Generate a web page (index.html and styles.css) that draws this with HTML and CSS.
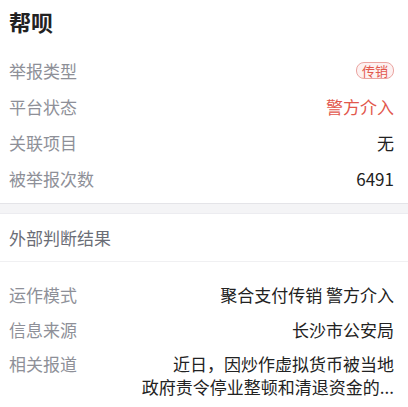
FILE: index.html
```html
<!DOCTYPE html>
<html lang="zh-CN">
<head>
  <meta charset="UTF-8" />
  <meta name="viewport" content="width=device-width, initial-scale=1.0"/>
  <title>帮呗</title>
  <link rel="stylesheet" href="styles.css">
</head>
<body>
  <section class="card">
    <h1 class="title">帮呗</h1>
    <div class="rows">
      <div class="row"><span class="label">举报类型</span><span class="tag">传销</span></div>
      <div class="row"><span class="label">平台状态</span><span class="value alert">警方介入</span></div>
      <div class="row"><span class="label">关联项目</span><span class="value">无</span></div>
      <div class="row"><span class="label">被举报次数</span><span class="value">6491</span></div>
    </div>
  </section>

  <div class="divider"></div>

  <section class="card">
    <h2 class="section-title">外部判断结果</h2>
    <div class="rows rows-ext">
      <div class="row"><span class="label">运作模式</span><span class="value">聚合支付传销 警方介入</span></div>
      <div class="row"><span class="label">信息来源</span><span class="value">长沙市公安局</span></div>
      <div class="row row-top">
        <span class="label">相关报道</span>
        <span class="value report">近日，因炒作虚拟货币被当地<br>政府责令停业整顿和清退资金的...</span>
      </div>
    </div>
  </section>
</body>
</html>
```

FILE: styles.css
```css
body {
  margin: 0;
  font-family: "Noto Sans CJK SC", "Noto Sans", sans-serif;
  background: #fff;
  color: #222;
  width: 408px;
  overflow: hidden;
}
.card {
  padding: 0 14px 0 9px;
}
.title {
  margin: 0;
  padding-top: 8px;
  font-size: 22px;
  line-height: 26px;
  font-weight: 700;
  color: #222;
}
.rows {
  margin-top: 18px;
}
.row {
  display: flex;
  justify-content: space-between;
  align-items: center;
  height: 36px;
}
.label {
  font-size: 17px;
  color: #8e9098;
  white-space: nowrap;
}
.value {
  font-size: 17px;
  color: #222;
  text-align: right;
}
.alert {
  color: #e2574c;
}
.tag {
  font-size: 13px;
  line-height: 15px;
  padding: 0 5px;
  border: 1px solid #eba4a0;
  border-radius: 8px;
  background: #fdf1f1;
  color: #e2574c;
}
.divider {
  margin-top: 7px;
  height: 9px;
  background: #f4f4f6;
  border-top: 1px solid #e4e4e8;
  border-bottom: 1px solid #ececf0;
}
.section-title {
  margin: 0 -14px 0 -9px;
  padding: 0 14px 0 9px;
  height: 47px;
  line-height: 47px;
  font-size: 17px;
  font-weight: 400;
  color: #6a6d76;
  border-bottom: 1px solid #f0f0f2;
}
.rows-ext {
  margin-top: 15px;
}
.rows-ext .row {
  height: 35px;
}
.row-top {
  align-items: flex-start;
}
.rows-ext .row-top {
  height: auto;
  padding-top: 5px;
}
.row-top .label {
  line-height: 23px;
}
.report {
  line-height: 23px;
  white-space: nowrap;
}
```
